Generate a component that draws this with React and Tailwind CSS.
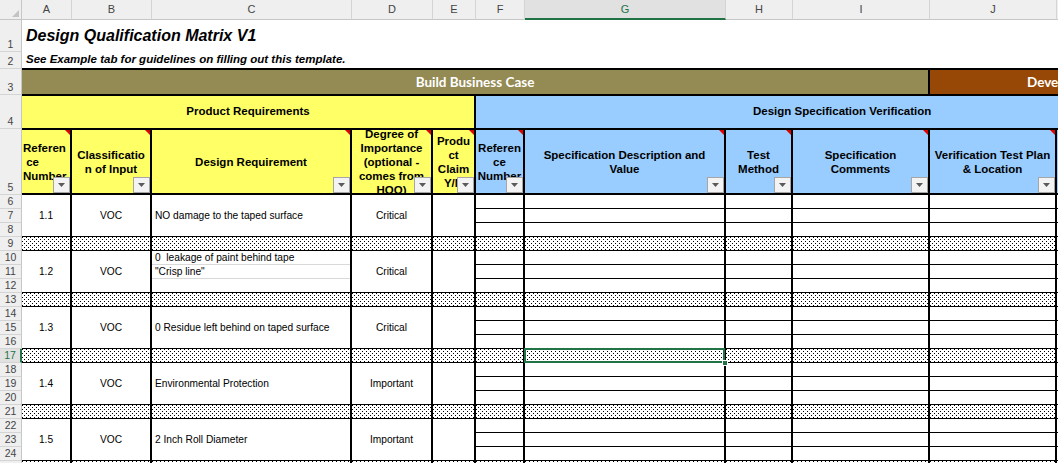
import React from 'react';

const COLS = [
  { id: 'A', w: 'w-[50px]' },
  { id: 'B', w: 'w-[80px]' },
  { id: 'C', w: 'w-[200px]' },
  { id: 'D', w: 'w-[81px]' },
  { id: 'E', w: 'w-[43px]' },
  { id: 'F', w: 'w-[49px]' },
  { id: 'G', w: 'w-[201px]' },
  { id: 'H', w: 'w-[67px]' },
  { id: 'I', w: 'w-[137px]' },
  { id: 'J', w: 'w-[127px]' },
];

const FJ = ['w-[49px]', 'w-[201px]', 'w-[67px]', 'w-[137px]', 'w-[127px]'];

const YELLOW = 'bg-[#ffff66]';
const BLUE = 'bg-[#99ccff]';

const HEADS = [
  { w: 'w-[50px]', bg: YELLOW, lines: ['Referen', ' ce', 'Number'], left: true },
  { w: 'w-[80px]', bg: YELLOW, lines: ['Classificatio', 'n of Input'] },
  { w: 'w-[200px]', bg: YELLOW, lines: ['Design Requirement'] },
  { w: 'w-[81px]', bg: YELLOW, lines: ['Degree of', 'Importance', '(optional -', 'comes from', 'HOQ)'] },
  { w: 'w-[43px]', bg: YELLOW, lines: ['Produ', 'ct', 'Claim', 'Y/N'] },
  { w: 'w-[49px]', bg: BLUE, lines: ['Referen', 'ce', 'Number'] },
  { w: 'w-[201px]', bg: BLUE, lines: ['Specification Description and', 'Value'] },
  { w: 'w-[67px]', bg: BLUE, lines: ['Test', 'Method'] },
  { w: 'w-[137px]', bg: BLUE, lines: ['Specification', 'Comments'] },
  { w: 'w-[127px]', bg: BLUE, lines: ['Verification Test Plan', '& Location'] },
];

const GROUPS = [
  { ref: '1.1', cls: 'VOC', req: 'NO damage to the taped surface', deg: 'Critical' },
  { ref: '1.2', cls: 'VOC', lines: ['0  leakage of paint behind tape', '"Crisp line"'], deg: 'Critical' },
  { ref: '1.3', cls: 'VOC', req: '0 Residue left behind on taped surface', deg: 'Critical' },
  { ref: '1.4', cls: 'VOC', req: 'Environmental Protection', deg: 'Important' },
  { ref: '1.5', cls: 'VOC', req: '2 Inch Roll Diameter', deg: 'Important' },
];

const ROWS = [
  { n: 1, h: 'h-[32px]' },
  { n: 2, h: 'h-[17px]' },
  { n: 3, h: 'h-[26px]' },
  { n: 4, h: 'h-[34px]' },
  { n: 5, h: 'h-[66px]' },
  ...Array.from({ length: 20 }, (_, i) => ({ n: i + 6, h: 'h-[14px]' })),
];

const DOTS =
  'bg-[conic-gradient(at_1px_1px,transparent_75%,#000_0),conic-gradient(at_1px_1px,transparent_75%,#000_0)] bg-[length:4px_4px] bg-[position:0_0,2px_2px]';

const Comment = () => (
  <svg className="absolute right-0 top-0" width="5" height="5">
    <path d="M0 0h5v5z" fill="#e00000" />
  </svg>
);

const FilterBtn = () => (
  <div className="absolute bottom-0 right-0 flex h-[16px] w-[17px] items-center justify-center border border-[#a6a6a6] bg-[#f3f3f3]">
    <svg width="7" height="4">
      <path d="M0 0h7L3.5 4z" fill="#5a5a5a" />
    </svg>
  </div>
);

function HeadCell({ w, bg, lines, left }) {
  return (
    <div className={`relative h-full shrink-0 overflow-hidden border-r-2 border-black ${w} ${bg}`}>
      <div
        className={`flex h-full flex-col justify-center whitespace-pre text-[11.5px] font-bold leading-[14px] ${
          left ? 'items-start pl-[1px]' : 'items-center text-center'
        }`}
      >
        {lines.map((l) => (
          <div key={l}>{l}</div>
        ))}
      </div>
      <Comment />
      <FilterBtn />
    </div>
  );
}

function Group({ g }) {
  return (
    <div className="flex h-[42px] shrink-0 border-b border-black text-[10.2px]">
      <div className="flex w-[50px] shrink-0 items-center justify-center border-r-2 border-black">{g.ref}</div>
      <div className="flex w-[80px] shrink-0 items-center justify-center border-r-2 border-black">{g.cls}</div>
      {g.lines ? (
        <div className="flex w-[200px] shrink-0 flex-col border-r-2 border-black">
          <div className="h-[14px] whitespace-pre border-b border-[#d9d9d9] pl-[3px] leading-[13px]">{g.lines[0]}</div>
          <div className="h-[14px] border-b border-[#d9d9d9] pl-[3px] leading-[13px]">{g.lines[1]}</div>
          <div className="flex-1" />
        </div>
      ) : (
        <div className="flex w-[200px] shrink-0 items-center border-r-2 border-black pl-[3px]">{g.req}</div>
      )}
      <div className="flex w-[81px] shrink-0 items-center justify-center border-r-2 border-black">{g.deg}</div>
      <div className="w-[43px] shrink-0 border-r-2 border-black" />
      <div className="flex flex-1 flex-col">
        {[0, 1, 2].map((i) => (
          <div key={i} className={`flex ${i < 2 ? 'h-[14px] border-b border-black' : 'flex-1'}`}>
            {FJ.map((w) => (
              <div key={w} className={`${w} shrink-0 border-r-2 border-black`} />
            ))}
          </div>
        ))}
      </div>
    </div>
  );
}

function DotRow({ selected }) {
  return (
    <div className="relative flex h-[14px] shrink-0 border-b border-black">
      {COLS.map((c) => (
        <div key={c.id} className={`relative ${c.w} shrink-0 border-r-2 border-black ${DOTS}`}>
          {selected && c.id === 'G' && (
            <>
              <div className="absolute -bottom-[1px] -left-[1px] -right-[1px] -top-[1px] z-10 border-2 border-[#217346]" />
              <div className="absolute -bottom-[4px] -right-[4px] z-20 h-[6px] w-[6px] border border-white bg-[#217346]" />
            </>
          )}
        </div>
      ))}
    </div>
  );
}

export default function App() {
  return (
    <div className="h-[463px] w-[1058px] overflow-hidden bg-white font-['Liberation_Sans',Arial,sans-serif] text-black">
      {/* column letters */}
      <div className="flex h-[20px] text-[11px] text-[#444]">
        <div className="relative w-[22px] shrink-0 border-b border-r border-[#c6c6c6] bg-[#efefef]">
          <svg className="absolute bottom-[2px] right-[2px]" width="7" height="7">
            <path d="M7 0v7H0z" fill="#c4c4c4" />
          </svg>
        </div>
        {COLS.map((c) =>
          c.id === 'G' ? (
            <div
              key={c.id}
              className={`${c.w} flex shrink-0 items-center justify-center border-b-2 border-r border-b-[#217346] border-r-[#d4d4d4] bg-[#e1e1e1] pt-[1px] text-[#217346]`}
            >
              {c.id}
            </div>
          ) : (
            <div
              key={c.id}
              className={`${c.w} flex shrink-0 items-center justify-center border-b border-r border-b-[#c6c6c6] border-r-[#d4d4d4] bg-[#efefef]`}
            >
              {c.id}
            </div>
          )
        )}
        <div className="flex-1 border-b border-[#c6c6c6] bg-[#efefef]" />
      </div>

      <div className="flex">
        {/* row numbers */}
        <div className="flex w-[22px] shrink-0 flex-col text-[10.5px] text-[#444]">
          {ROWS.map((r) =>
            r.n === 17 ? (
              <div
                key={r.n}
                className={`${r.h} flex shrink-0 items-end justify-center border-b border-r-2 border-b-[#d4d4d4] border-r-[#217346] bg-[#e1e1e1] leading-[13px] text-[#217346]`}
              >
                {r.n}
              </div>
            ) : (
              <div
                key={r.n}
                className={`${r.h} flex shrink-0 items-end justify-center border-b border-r border-b-[#d4d4d4] border-r-[#c6c6c6] bg-[#efefef] leading-[13px]`}
              >
                {r.n}
              </div>
            )
          )}
        </div>

        {/* sheet */}
        <div className="flex min-w-0 flex-1 flex-col overflow-hidden">
          <div className="flex h-[32px] shrink-0 items-center pl-[4px] text-[16px] font-bold italic">
            Design Qualification Matrix V1
          </div>
          <div className="flex h-[18px] shrink-0 items-center border-b-2 border-black pl-[4px] text-[11.5px] font-bold italic">
            See Example tab for guidelines on filling out this template.
          </div>
          <div className="flex h-[26px] shrink-0 border-b-2 border-black font-['Lato',sans-serif] text-[13.5px] font-bold text-white">
            <div className="flex w-[908px] shrink-0 items-center justify-center border-r-2 border-black bg-[#948a54]">
              Build Business Case
            </div>
            <div className="flex flex-1 items-center overflow-hidden whitespace-nowrap bg-[#974806] pl-[97px]">
              Develop Concept
            </div>
          </div>
          <div className="flex h-[34px] shrink-0 border-b-2 border-black text-[11.5px] font-bold">
            <div className={`flex w-[454px] shrink-0 items-center justify-center border-r-2 border-black ${YELLOW}`}>
              Product Requirements
            </div>
            <div className={`flex flex-1 items-center whitespace-nowrap pl-[277px] ${BLUE}`}>
              Design Specification Verification
            </div>
          </div>
          <div className="flex h-[65px] shrink-0 border-b-2 border-black">
            {HEADS.map((h, i) => (
              <HeadCell key={i} {...h} />
            ))}
            <div className={`flex-1 ${BLUE}`} />
          </div>

          {GROUPS.map((g, i) => (
            <React.Fragment key={g.ref}>
              <Group g={g} />
              {i < GROUPS.length - 1 && <DotRow selected={i === 2} />}
            </React.Fragment>
          ))}
          <DotRow />
        </div>
      </div>
    </div>
  );
}
